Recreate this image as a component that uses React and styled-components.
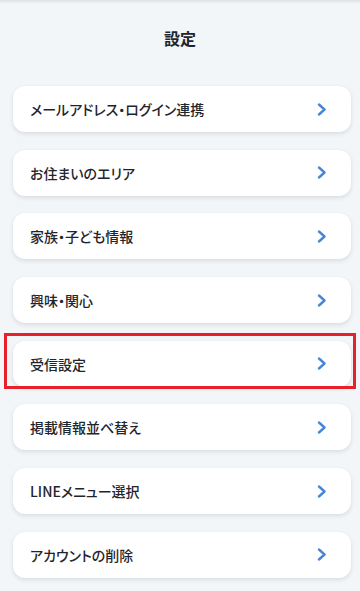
import React from 'react'
import styled, { createGlobalStyle } from 'styled-components';

const GlobalStyle = createGlobalStyle`
    html, body {
        margin: 0;
        padding: 0;
        background: #f3f6f8;
    }
    body {
        font-family: "Noto Sans CJK JP", "Noto Sans", sans-serif;
        color: #1f252c;
    }
`

const Page = styled.div`
    min-height: 591px;
    background: #f3f6f8;
    display: flex;
    flex-direction: column;
`
const TopShade = styled.div`
    height: 4px;
    background: linear-gradient(to bottom, rgba(0, 0, 0, 0.08), rgba(0, 0, 0, 0));
`
const Title = styled.h1`
    margin: 0;
    padding-top: 22px;
    height: 24px;
    line-height: 24px;
    text-align: center;
    font-size: 16px;
    font-weight: 700;
    color: #1f252c;
`
const List = styled.div`
    display: flex;
    flex-direction: column;
    gap: 17.7px;
    padding: 36px 9px 0 13px;
`
const Card = styled.div`
    position: relative;
    height: 46px;
    display: flex;
    align-items: center;
    justify-content: space-between;
    padding: 0 24px 0 17px;
    background: #ffffff;
    border-radius: 12px;
    box-shadow: 0 2px 4px rgba(30, 50, 70, 0.12), 0 0 1px rgba(30, 50, 70, 0.06);

    ${props => props.$highlight && `
        &::after {
            content: "";
            position: absolute;
            left: -9px;
            top: -8px;
            right: -5px;
            bottom: -2px;
            border: 3px solid #e8202a;
            pointer-events: none;
        }
    `}
`
const Label = styled.span`
    font-size: 14px;
    font-weight: 500;
    font-feature-settings: "palt";
    color: #1f252c;
`

function Chevron() {
    return (
        <svg width="10" height="13" viewBox="0 0 10 13">
            <polyline points="2,1.5 7.5,6.5 2,11.5" fill="none" stroke="#4a86d8" strokeWidth="2.4" strokeLinecap="round" strokeLinejoin="round" />
        </svg>
    )
}

const items = [
    'メールアドレス・ログイン連携',
    'お住まいのエリア',
    '家族・子ども情報',
    '興味・関心',
    '受信設定',
    '掲載情報並べ替え',
    'LINEメニュー選択',
    'アカウントの削除',
]

function App() {
    return (
        <>
            <GlobalStyle />
            <Page>
                <TopShade />
                <Title>設定</Title>
                <List>
                    {items.map((item) => (
                        <Card key={item} $highlight={item === '受信設定'}>
                            <Label>{item}</Label>
                            <Chevron />
                        </Card>
                    ))}
                </List>
            </Page>
        </>
    )
}
export default App;
